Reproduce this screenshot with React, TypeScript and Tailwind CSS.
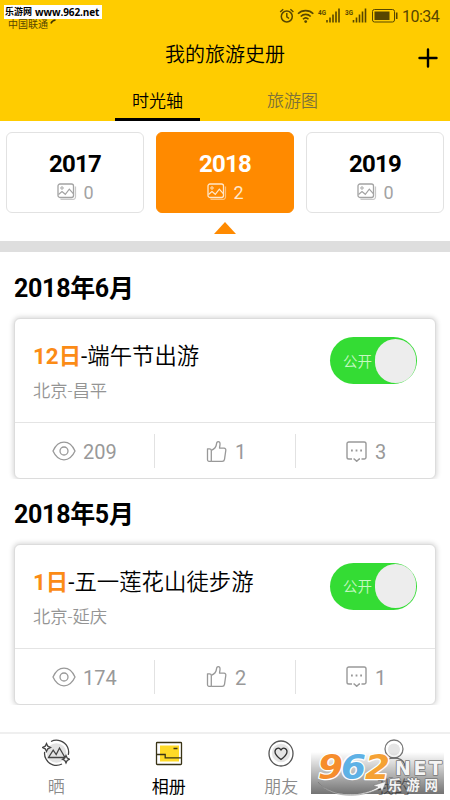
interface Trip {
  month: string;
  day: string;
  title: string;
  place: string;
  views: number;
  likes: number;
  comments: number;
}

const years = [
  { year: "2017", count: 0 },
  { year: "2018", count: 2 },
  { year: "2019", count: 0 },
];

const trips: Trip[] = [
  {
    month: "2018年6月",
    day: "12日",
    title: "端午节出游",
    place: "北京-昌平",
    views: 209,
    likes: 1,
    comments: 3,
  },
  {
    month: "2018年5月",
    day: "1日",
    title: "五一莲花山徒步游",
    place: "北京-延庆",
    views: 174,
    likes: 2,
    comments: 1,
  },
];

function PhotosIcon() {
  return (
    <svg width="20" height="18" viewBox="0 0 20 18" fill="none" stroke="currentColor">
      <rect x="1" y="1" width="15.5" height="13.5" rx="2" strokeWidth="1.3" />
      <path d="M18.5 3.5v10.5a2.3 2.3 0 0 1-2.3 2.3H3.5" strokeWidth="1.2" opacity=".6" />
      <circle cx="5" cy="5" r="1.2" strokeWidth="1" />
      <path d="M1.5 11.5l3.5-3 3.3 2.8 4-5.2 4 4.6" strokeWidth="1.2" />
    </svg>
  );
}

function EyeIcon() {
  return (
    <svg width="24" height="20" viewBox="0 0 24 20" fill="none" stroke="#999" strokeWidth="1.3">
      <path d="M1 10C3.5 4.5 7.5 1.2 12 1.2S20.5 4.5 23 10c-2.5 5.5-6.5 8.8-11 8.8S3.5 15.5 1 10z" />
      <circle cx="12" cy="10" r="4" />
    </svg>
  );
}

function ThumbIcon() {
  return (
    <svg width="21" height="23" viewBox="0 0 21 23" fill="none" stroke="#999" strokeWidth="1.3" strokeLinejoin="round">
      <path d="M1.5 8.8h2a1.800 1.800 0 0 1 1.800 1.800v10.700H3a1.500 1.500 0 0 1-1.500-1.500z" />
      <path d="M5.3 10.300C8.500 9 10.300 7 10.500 3.900c.1-1.500.7-2.300 1.700-2.300 1.400 0 2 1.200 1.800 3L13.500 8.200h4.500c1.400 0 2 .9 1.800 2.100l-1.300 9c-.2 1.300-1 2-2.300 2H5.300" />
    </svg>
  );
}

function CommentIcon() {
  return (
    <svg width="21" height="21" viewBox="0 0 21 21" fill="none" stroke="#999" strokeWidth="1.4">
      <path d="M6 18H2.800A1.800 1.800 0 0 1 1 16.200V2.800A1.800 1.800 0 0 1 2.800 1h15.400A1.800 1.800 0 0 1 20 2.800v13.400a1.800 1.800 0 0 1-1.800 1.800H15.500" />
      <path d="M7.5 18h.7l2.500 2.300 2.500-2.300h.8" />
      <path d="M5 9.500h1.800M9.600 9.500h1.800M14.200 9.500H16" strokeWidth="1.8" />
    </svg>
  );
}

function StatusBar() {
  return (
    <div className="relative flex h-8 items-center justify-end pr-[10px] text-[#574600]">
      <div className="absolute top-[5px] left-1 z-10 flex h-[14px] w-[98px] items-center bg-white pl-px text-[9px] leading-[14px] font-bold whitespace-nowrap text-black">
        乐游网
        <span className="ml-[3px] font-['Open_Sans','Noto_Sans'] text-[10px] tracking-[-0.1px]">www.962.net</span>
      </div>
      <span className="absolute top-[18px] left-2 text-[10px] leading-[14px]">中国联通</span>
      <svg className="absolute top-[19px] left-[50px]" width="6" height="6" viewBox="0 0 6 6" fill="none">
        <path d="M1 4.5C1.5 2.5 3 1.5 5.5 1" stroke="#403300" strokeWidth="1.6" />
      </svg>
      <svg width="119" height="18" viewBox="0 0 119 18" fill="none" stroke="currentColor">
        <circle cx="7.8" cy="9.5" r="5.500" strokeWidth="1.5" />
        <path d="M7.800 6v3.800l2.300 1.700M1.200 5l3-2.800M14.400 5l-3-2.800" strokeWidth="1.4" />
        <path d="M19 6.800c4-4.300 11.300-4.300 15.300 0M21.700 9.500c2.800-2.900 7.200-2.900 10 0M24 12.200c1.600-1.600 3.900-1.600 5.500 0" strokeWidth="1.6" />
        <circle cx="26.700" cy="14.600" r="1.4" fill="currentColor" stroke="none" />
        <path d="M48 13v2.500M51 10.500v5M54 7.500v8M57 4.500v11M60 1.500v14M74.500 13v2.500M77.500 10.500v5M80.500 7.500v8M83.500 4.500v11M86.500 1.500v14" strokeWidth="1.6" />
        <g fill="currentColor" stroke="none" fontFamily="Roboto" fontSize="8" fontWeight="700">
          <text x="39" y="7.500" textLength="8" lengthAdjust="spacingAndGlyphs">4G</text>
          <text x="66" y="7.500" textLength="8" lengthAdjust="spacingAndGlyphs">3G</text>
        </g>
        <rect x="93.500" y="2.500" width="22" height="12.5" rx="2" strokeWidth="1" />
        <path d="M95.500 4.500h15v8.500h-15z" fill="currentColor" stroke="none" />
        <path d="M117.700 5.500v6.500" strokeWidth="1.6" />
      </svg>
      <span className="mt-[2px] ml-[4px] w-[38px] text-[16px] leading-[18px] tracking-[-0.5px]">10:34</span>
    </div>
  );
}

function Header() {
  return (
    <header className="h-[121px] bg-[#ffcc00]">
      <StatusBar />
      <div className="relative flex h-[43px] items-center justify-center pt-[2px] text-[20px] font-[350] text-black">
        我的旅游史册
        <svg className="absolute top-[16px] right-[12px]" width="20" height="20" viewBox="0 0 20 20">
          <path d="M1.5 10h17M10 1.5v17" stroke="#000" strokeWidth="2.4" strokeLinecap="round" />
        </svg>
      </div>
      <div className="flex h-[46px] justify-center gap-[50px] text-[17px] font-[350]">
        <div className="flex w-[85px] items-center justify-center border-b-[3px] border-black pt-[11px] text-black">时光轴</div>
        <div className="flex w-[85px] items-center justify-center border-b-[3px] border-transparent pt-[11px] text-[#7d7139]">旅游图</div>
      </div>
    </header>
  );
}

function YearPicker() {
  return (
    <section className="h-[131px] border-b-[11px] border-[#dedede] px-1.5 pt-[11px]">
      <div className="flex gap-3">
        {years.map((item) => {
          const active = item.year === "2018";
          return (
            <div
              key={item.year}
              className={`relative flex h-[81px] flex-1 flex-col items-center rounded-[6px] border-[1.5px] pt-[17px] ${
                active ? "border-[#ff8a00] bg-[#ff8a00] text-white" : "border-[#e2e2e2] text-black"
              }`}
            >
              <div className="text-[24px] leading-[28px] font-bold tracking-[-0.8px]">{item.year}</div>
              <div className={`mt-[2px] flex items-center gap-[6px] pl-px text-[18px] leading-[26px] ${active ? "text-[#ffe8cc]" : "text-[#a3a3a3]"}`}>
                <span className="-mt-[3px]">
                  <PhotosIcon />
                </span>
                {item.count}
              </div>
              {active && (
                <div className="absolute top-[89px] h-3 w-[22px] bg-[#ff8a00] [clip-path:polygon(50%_0,100%_100%,0_100%)]" />
              )}
            </div>
          );
        })}
      </div>
    </section>
  );
}

function TripCard({ trip }: { trip: Trip }) {
  return (
    <section className="h-[225.5px]">
      <h2 className="flex h-[60px] items-end pb-[6px] pl-[14px] text-[25px] leading-[34px] font-bold tracking-[-0.3px] text-black">
        {trip.month}
      </h2>
      <div className="h-[167px] overflow-hidden px-[14px] pt-[6px]">
        <div className="h-[161px] rounded-[6px] border-[1.5px] border-[#dcdcdc] bg-white shadow-[0_0_5px_1px_rgba(0,0,0,0.16)]">
          <div className="flex h-[104px] justify-between border-b-[1.5px] border-[#e4e4e4] pr-[18px] pl-[18px]">
            <div className="pt-[20px]">
              <div className="text-[22.4px] leading-[34px] font-[350] text-black">
                <span className="font-bold text-[#fb8b16]">{trip.day}</span>
                <span className="font-normal">-</span>
                {trip.title}
              </div>
              <div className="mt-[5px] text-[17.3px] leading-[26px] font-[350] text-[#949494]">{trip.place}</div>
            </div>
            <div className="mt-[18px] flex h-[47px] w-[87px] items-center justify-end rounded-full bg-[#34dc34] pr-[1px]">
              <span className="mt-[4px] mr-[3px] text-[14.5px] font-[350] text-[#c6f8c3]">公开</span>
              <span className="h-[44px] w-[41px] rounded-full bg-[#ededed]" />
            </div>
          </div>
          <div className="flex h-[56px] items-center text-[20px] text-[#999]">
            <div className="flex h-[34px] w-[140px] items-center gap-[7px] border-r-[1.5px] border-[#e2e2e2] pl-[37px]">
              <EyeIcon />
              <span className="pt-[2px]">{trip.views}</span>
            </div>
            <div className="flex h-[34px] w-[141px] items-center gap-[8px] border-r-[1.5px] border-[#e2e2e2] pl-[51px]">
              <ThumbIcon />
              <span className="pt-[2px]">{trip.likes}</span>
            </div>
            <div className="flex h-[34px] flex-1 items-center gap-[8px] pl-[50px]">
              <CommentIcon />
              <span className="pt-[2px]">{trip.comments}</span>
            </div>
          </div>
        </div>
      </div>
    </section>
  );
}

function ShareIcon() {
  return (
    <svg width="28" height="28" viewBox="0 0 28 28" fill="none" stroke="#444" strokeWidth="1.3">
      <circle cx="14.5" cy="14" r="9.8" fill="#e3e3e3" stroke="none" />
      <path d="M9 2.5C15 -.5 22.5 2 25.5 8c1.200 2.500 1.400 5.200.8 7.800M20 25C14 28 7 26 4 20c-1.300-2.300-1.700-4.800-1.300-7.200" />
      <path d="M6.5 18.5l4.700-7.300 3 4.300 3.300-6.500 5.500 9.500z" />
      <path d="M4.500 4.500l1.300 2.700 2.700 1.300-2.700 1.300-1.300 2.700-1.300-2.700L.5 8.500l2.700-1.300zM24 16.500l1.200 2.500 2.300 1.200-2.300 1.200-1.200 2.500-1.200-2.500-2.300-1.200L22.800 19z" fill="#fff" />
    </svg>
  );
}

function AlbumIcon() {
  return (
    <svg width="28" height="28" viewBox="0 0 28 28" fill="none" stroke="#3a3415" strokeWidth="1.3">
      <path d="M5 6.500h19v16H5z" fill="#ffda27" stroke="none" />
      <rect x="1.5" y="3.5" width="25" height="22" rx=".8" />
      <path d="M1.500 15.500h8.700v3.300H26.500M18.500 9.500h4" />
    </svg>
  );
}

function FriendsIcon() {
  return (
    <svg width="28" height="28" viewBox="0 0 28 28" fill="none" stroke="#555" strokeWidth="1.3">
      <ellipse cx="14" cy="14.5" rx="12" ry="12.5" />
      <circle cx="14" cy="14" r="9.2" fill="#e5e5e5" stroke="none" />
      <path d="M14 20.500c-4-3-6-5-6-7.800 0-3.800 4.300-4.800 6-1.700 1.700-3.100 6-2.100 6 1.700 0 2.800-2 4.800-6 7.800z" stroke="#333" />
    </svg>
  );
}

function MineIcon() {
  return (
    <svg width="28" height="28" viewBox="0 0 28 28" fill="none" stroke="#777" strokeWidth="1.3">
      <circle cx="14" cy="10" r="9" fill="#fff" />
      <circle cx="14" cy="10.5" r="6" fill="#e5e5e5" stroke="none" />
      <path d="M3 27c1-5 5-8 11-8s10 3 11 8" />
    </svg>
  );
}

// Site badge drawn over the last tab
function SiteBadge() {
  return (
    <div className="absolute right-[6px] bottom-[6px] h-[42px] w-[133px] bg-linear-to-b from-transparent to-black/55">
      <svg className="overflow-visible" width="133" height="42" viewBox="0 0 133 42">
        <path d="M7 30C19 45 50 46 67 35l-5-1.500 13-4-4 10-1.500-3.500C49 47 19 46 7 30z" fill="#f6f6f6" stroke="#777" strokeWidth=".5" />
        <g fontFamily="DejaVu Sans" fontWeight="700" fontSize="33" fontStyle="italic" stroke="#fff" strokeWidth="2.5" strokeLinejoin="round" paintOrder="stroke">
          <text x="7" y="27" fill="#f68d2c" textLength="25" lengthAdjust="spacingAndGlyphs">9</text>
          <text x="30" y="27" fill="#5eb1e5" textLength="25" lengthAdjust="spacingAndGlyphs">6</text>
          <text x="54" y="27" fill="#f5a134" textLength="25" lengthAdjust="spacingAndGlyphs">2</text>
        </g>
        <g fill="#f4f4f4" stroke="#777" strokeWidth="1.6" strokeLinejoin="round" paintOrder="stroke" fontWeight="700">
          <text x="77" y="29" fontFamily="Liberation Sans" fontSize="20">.</text>
          <text x="84" y="22.5" fontFamily="DejaVu Sans" fontSize="19" textLength="47">NET</text>
          <text x="77" y="38" fontFamily="Noto Sans CJK SC" fontSize="13.5" textLength="50">乐游网</text>
        </g>
      </svg>
    </div>
  );
}

const tabs = [
  { label: "晒", icon: <ShareIcon />, active: false },
  { label: "相册", icon: <AlbumIcon />, active: true },
  { label: "朋友", icon: <FriendsIcon />, active: false },
  { label: "我的", icon: <MineIcon />, active: false },
];

function TabBar() {
  return (
    <nav className="relative mt-auto flex h-[68px] border-t-2 border-[#efefef] bg-white">
      {tabs.map((tab) => (
        <div key={tab.label} className="flex flex-1 flex-col items-center pt-[5px]">
          {tab.icon}
          <span className={`mt-[7px] text-[17px] leading-[26px] ${tab.active ? "text-black" : "font-[350] text-[#8a8a8a]"}`}>
            {tab.label}
          </span>
        </div>
      ))}
      <SiteBadge />
    </nav>
  );
}

export default function App() {
  return (
    <div className="flex h-[800px] w-[450px] flex-col overflow-hidden bg-white font-['Roboto','Noto_Sans_CJK_SC',sans-serif]">
      <Header />
      <YearPicker />
      <main>
        {trips.map((trip) => (
          <TripCard key={trip.month} trip={trip} />
        ))}
      </main>
      <TabBar />
    </div>
  );
}
